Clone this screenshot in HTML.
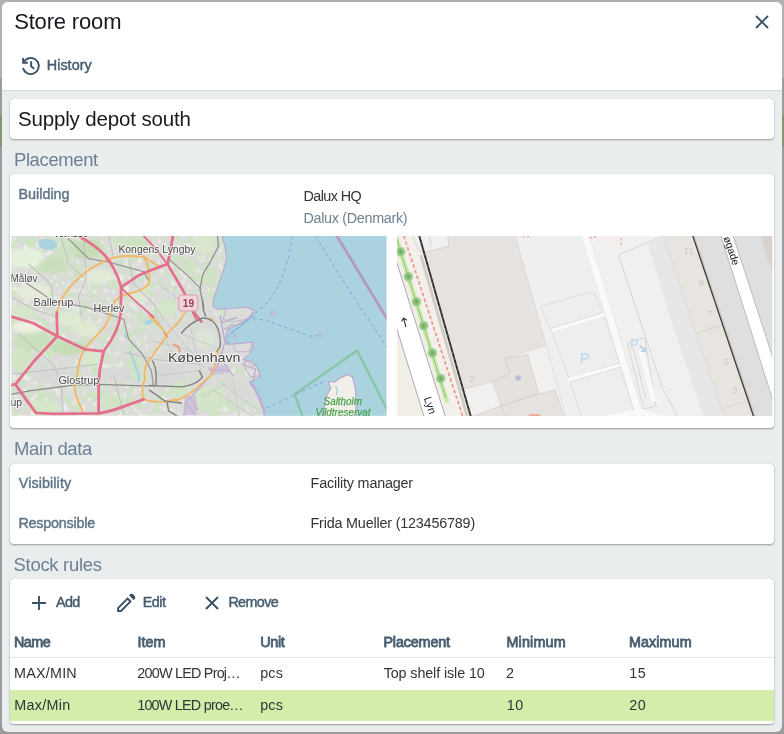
<!DOCTYPE html>
<html lang="en">
<head>
<meta charset="utf-8">
<title>Store room</title>
<style>
*{box-sizing:border-box;margin:0;padding:0}
html,body{width:784px;height:734px;overflow:hidden}
body{background:#9c9c9c;font-family:"Liberation Sans",sans-serif;font-size:14px;color:#20262b;position:relative}
.abs{position:absolute;white-space:nowrap;line-height:1}
#dialog{position:absolute;left:2px;top:2px;width:780px;height:730px;border-radius:6px;background:#e9edee;overflow:hidden}
#header{position:absolute;left:0;top:0;width:780px;height:89px;background:#fff;border-bottom:1px solid #d3d9dd}
.title{color:#161b20}
.name{color:#161b20}
.btn{color:#465c6f;-webkit-text-stroke:.45px #465c6f}
.card{position:absolute;left:10px;width:764px;background:#fff;border-radius:4px;box-shadow:0 1px 2px rgba(0,0,0,.35),0 0 1px rgba(0,0,0,.15)}
.sec{color:#6e8192}
.lbl{color:#5f7486;-webkit-text-stroke:.42px #5f7486}
.val{color:#30353a}
.sub{color:#6e8192}
.th{color:#485d70;-webkit-text-stroke:.8px #485d70}
.td{color:#30353a}
svg{position:absolute;display:block}
h1,h2{font-weight:normal}
button{all:unset}
#layer{position:absolute;left:0;top:0;width:784px;height:734px;will-change:transform}
</style>
</head>
<body>
<div style="position:absolute;left:0;top:0;width:784px;height:78px;background:#b0b0b0"></div>
<div style="position:absolute;left:0;top:115px;width:784px;height:31px;background:#84966a"></div>
<div id="dialog">
  <div id="header"></div>
</div>
<main id="layer">
  <header>
    <h1 id="title" class="abs title" style="left:14.17px;top:10.98px;font-size:22px;letter-spacing:-0.166px">Store room</h1>
    <button type="button" aria-label="Close"><svg style="left:755px;top:15px" width="14" height="14" viewBox="0 0 14 14"><path d="M1 1L13 13M13 1L1 13" stroke="#3a5166" stroke-width="1.9" fill="none"/></svg></button>
    <nav>
      <button type="button"><svg style="left:16px;top:52px" width="30" height="28" viewBox="0 0 30 28" fill="none" stroke="#3a5166" stroke-width="1.9"><path d="M9.68 7.74A8.050 8.050 0 1 1 6.970 16.080"/><path d="M7.100 6.100V10.800H11.900M7.100 10.800L9.900 7.500"/><path d="M15.130 9.200V14.200L18.200 16.900"/></svg><span id="hist" class="abs btn" style="left:46.75px;top:57.85px;font-size:14.35px;letter-spacing:0.047px">History</span></button>
    </nav>
  </header>
  <section>
    <div class="card" style="top:99px;height:40px"></div>
    <div id="supply" class="abs name" style="left:17.91px;top:109.00px;font-size:20.5px;letter-spacing:-0.146px">Supply depot south</div>
  </section>
  <section>
    <h2 id="s1" class="abs sec" style="left:13.95px;top:150.93px;font-size:18.45px;letter-spacing:-0.355px">Placement</h2>
    <div class="card" style="top:174px;height:254px"></div>
    <div id="building" class="abs lbl" style="left:18.50px;top:186.85px;font-size:14.35px;letter-spacing:0.000px">Building</div>
    <div id="hq" class="abs val" style="left:303.53px;top:189.40px;font-size:14.35px;letter-spacing:-0.573px">Dalux HQ</div>
    <div id="dk" class="abs sub" style="left:303.53px;top:210.55px;font-size:14.35px;letter-spacing:-0.309px">Dalux (Denmark)</div>
    <div id="maps" style="position:absolute;left:10px;top:175px;width:764px;height:253px">
<svg id="m1" style="left:1px;top:61px" width="377" height="180" viewBox="11.6 236 377 180" font-family="'Liberation Sans',sans-serif">
<defs>
<filter id="bl" x="-20%" y="-20%" width="140%" height="140%"><feGaussianBlur stdDeviation="6"/></filter>
<filter id="bs" x="-20%" y="-20%" width="140%" height="140%"><feGaussianBlur stdDeviation="2.5"/></filter>
<clipPath id="c1"><rect x="12.0" y="236" width="375" height="179.8"/></clipPath>
<filter id="ng" x="0" y="0" width="100%" height="100%" color-interpolation-filters="sRGB"><feTurbulence type="fractalNoise" baseFrequency="0.11" numOctaves="3" seed="7"/><feColorMatrix type="matrix" values="0 0 0 0 0.80  0 0 0 0 0.895  0 0 0 0 0.76  5 0 0 0 -2.45"/></filter>
<filter id="nl" x="0" y="0" width="100%" height="100%" color-interpolation-filters="sRGB"><feTurbulence type="fractalNoise" baseFrequency="0.16" numOctaves="2" seed="21"/><feColorMatrix type="matrix" values="0 0 0 0 0.93  0 0 0 0 0.93  0 0 0 0 0.905  0 5 0 0 -2.7"/></filter>
<radialGradient id="city"><stop offset="0" stop-color="#dadada" stop-opacity=".85"/><stop offset=".6" stop-color="#dadada" stop-opacity=".6"/><stop offset="1" stop-color="#dadada" stop-opacity="0"/></radialGradient>
</defs>
<g clip-path="url(#c1)">
<rect x="0" y="230" width="400" height="200" fill="#dbdbd9"/>
<rect x="11" y="236" width="260" height="180" filter="url(#nl)"/>
<rect x="11" y="236" width="260" height="180" filter="url(#ng)"/>
<ellipse cx="195" cy="350" rx="60" ry="55" fill="url(#city)"/>
<!-- LEFT HALF : zoom A coords -->
<g transform="translate(4,234) scale(0.2506)">
  <g filter="url(#bl)">
    <ellipse cx="90" cy="95" rx="75" ry="40" fill="#e4f1dc"/>
    <ellipse cx="200" cy="125" rx="60" ry="30" fill="#c9dfbb"/>
    <ellipse cx="330" cy="60" rx="70" ry="40" fill="#c6ddb8"/>
    <ellipse cx="250" cy="70" rx="40" ry="35" fill="#cfe3c2"/>
    <ellipse cx="520" cy="40" rx="60" ry="30" fill="#cde2c0"/>
    <ellipse cx="380" cy="170" rx="60" ry="30" fill="#e2ead8"/>
    <ellipse cx="120" cy="230" rx="70" ry="35" fill="#e6ebdc"/>
    <ellipse cx="80" cy="310" rx="50" ry="30" fill="#d6e6c8"/>
    <ellipse cx="260" cy="340" rx="50" ry="30" fill="#dcebd0"/>
    <ellipse cx="120" cy="430" rx="80" ry="40" fill="#cbe0bc"/>
    <ellipse cx="260" cy="455" rx="70" ry="30" fill="#c6ddb6"/>
    <ellipse cx="70" cy="500" rx="50" ry="40" fill="#d3e5c4"/>
    <ellipse cx="350" cy="500" rx="40" ry="30" fill="#d8e8cc"/>
    <ellipse cx="330" cy="380" rx="50" ry="30" fill="#dfe9d2"/>
    <ellipse cx="100" cy="370" rx="60" ry="25" fill="#eef0df"/>
    <ellipse cx="160" cy="690" rx="60" ry="30" fill="#d6e7c8"/>
    <ellipse cx="440" cy="670" rx="50" ry="30" fill="#d2e4c4"/>
    <ellipse cx="520" cy="530" rx="30" ry="50" fill="#cfe2c4"/>
    <ellipse cx="590" cy="350" rx="40" ry="25" fill="#cfe0d0"/>
    <ellipse cx="650" cy="300" rx="40" ry="30" fill="#d6e6ca"/>
    <ellipse cx="700" cy="620" rx="40" ry="40" fill="#d2e4c6"/>
    <ellipse cx="740" cy="130" rx="30" ry="30" fill="#cfe3c2"/>
    <ellipse cx="540" cy="250" rx="40" ry="20" fill="#dfe8d4"/>
    <ellipse cx="450" cy="560" rx="60" ry="30" fill="#d9d9d9"/>
    <ellipse cx="650" cy="560" rx="70" ry="40" fill="#d8d8d8"/>
    <ellipse cx="200" cy="560" rx="90" ry="40" fill="#d9d9d8"/>
  </g>
  <path d="M140 25 Q175 10 210 30 Q222 50 200 62 Q160 66 142 50Z" fill="#aad3df"/>
  <path d="M505 470 Q520 500 530 540 Q545 560 540 590" stroke="#aad3df" stroke-width="9" fill="none" stroke-linecap="round"/>
  <path d="M560 350 l30 -10 l10 14 l-30 10z M480 395 l12 0 l6 20 l-12 0z" fill="#aad3df"/>
  <!-- minor roads -->
  <g stroke="#c2c2c2" stroke-width="4" fill="none">
    <path d="M30 250 L120 300 L210 330 M320 10 L330 180 L300 250 L310 330 M230 10 L260 120 L330 180 M60 400 L200 520 L230 600 L240 715 M30 560 L210 540 L380 520 M420 10 L440 95 M480 470 L600 500 L782 520 M440 560 L480 720 M620 200 L700 260 M500 100 L520 200 L600 280 L640 340 M100 120 L190 200 L200 270"/>
  </g>
  <!-- rail -->
  <g stroke="#9a9a9a" stroke-width="5" fill="none" stroke-linejoin="round">
    <path d="M90 195 L200 268 L330 292 L480 340 L500 420 L555 480 L590 545 L600 612"/>
    <path d="M258 18 L340 98 L420 112 L560 150 L582 190"/>
    <path d="M660 100 L740 170 L790 220"/>
  </g>
  <path d="M30 640 L110 625 L290 602 L380 600 L560 606 L600 606" stroke="#8a8a8a" stroke-width="5" fill="none"/>
  <path d="M380 715 L470 690 L560 660" stroke="#8a8a8a" stroke-width="4" fill="none"/>
  <!-- orange -->
  <g stroke="#f3b866" stroke-width="7.5" fill="none" stroke-linejoin="round" stroke-linecap="round">
    <path d="M213 312 Q225 260 262 215 Q320 150 380 120 Q430 92 480 88 L560 90 L622 130"/>
    <path d="M560 90 Q590 140 580 200 Q560 225 500 238 Q450 250 438 280 Q435 320 400 375 Q360 420 325 455 Q300 500 295 560 Q275 610 295 660 L320 716"/>
    <path d="M585 500 Q555 530 565 580 Q545 620 560 660 Q620 680 690 660"/>
    <path d="M600 335 L635 378"/>
  </g>
  
  <!-- red -->
  <g stroke="#e4708b" stroke-width="11" fill="none" stroke-linejoin="round" stroke-linecap="round">
    <path d="M300 8 Q360 40 405 85 Q445 130 470 210 L468 320 Q460 390 400 468"/>
    <path d="M400 468 L325 460 L215 408 L120 356 L20 326"/>
    <path d="M213 314 L215 408 L120 510 L48 600 L20 604"/>
    <path d="M48 600 L90 660 L130 714 L200 718 L380 716 L430 706 L560 660"/>
    <path d="M400 468 L385 540 L380 600 L380 716"/>
    <path d="M470 212 L540 165 L600 140 L655 120 L668 60 L676 8"/>
    <path d="M655 120 L690 180 L725 240 L750 300 L790 350"/>
  </g>
  <g stroke="#e4708b" stroke-width="7.5" fill="none" stroke-linejoin="round" stroke-linecap="round">
    <path d="M470 215 L520 262 L600 332"/>
    <path d="M560 8 L600 50 L655 120"/>
  </g>
</g>
<!-- RIGHT HALF : zoom B coords -->
<g transform="translate(196,234) scale(0.2506)">
  <g filter="url(#bl)">
    <ellipse cx="40" cy="40" rx="40" ry="40" fill="#d8e6cc"/>
    <ellipse cx="60" cy="170" rx="30" ry="40" fill="#d0e2c4"/>
    <ellipse cx="40" cy="420" rx="40" ry="40" fill="#dde6d6"/>
    <ellipse cx="60" cy="660" rx="60" ry="50" fill="#d3e5c6"/>
    <ellipse cx="170" cy="620" rx="50" ry="60" fill="#dadad8"/>
  </g>
  <path d="M105 0 L118 50 L125 100 L110 150 L100 180 L82 230 L75 250 L70 290 L90 300 L125 298 L150 300 L175 295 L205 292 L235 305 L225 325 L200 345 L160 365 L130 380 L120 410 L125 440 L160 438 L230 432 L228 455 L215 480 L190 500 L225 510 L245 530 L260 565 L240 580 L215 590 L235 620 L250 650 L270 700 L278 740 L800 740 L800 0Z" fill="#aad3df" stroke="#b9a3cc" stroke-width="4" stroke-linejoin="round"/>
  <!-- harbor details -->
  <g fill="#dcdcda" stroke="#b9a3cc" stroke-width="3">
    <path d="M150 440 L228 432 L215 470 L160 470Z"/>
    <path d="M195 505 L245 530 L258 565 L220 570 L200 540Z"/>
    <path d="M125 298 L175 295 L205 292 L235 305 L205 340 L150 350 L110 340Z"/>
  </g>
  
  <circle cx="310" cy="318" r="8" fill="#d9c9d9" stroke="#b79cc4" stroke-width="3"/>
  <circle cx="497" cy="405" r="7" fill="#d9c9d9" stroke="#b79cc4" stroke-width="3"/>
  <circle cx="158" cy="407" r="5" fill="#d9c9d9" stroke="#b79cc4" stroke-width="3"/>
  <!-- rail in right half -->
  <g stroke="#8e8e8e" stroke-width="5" fill="none" stroke-linejoin="round">
    <path d="M88 8 L92 50 L60 110 L30 160 L18 220 L35 300"/>
  </g>
  <g stroke="#f3b866" stroke-width="7.5" fill="none" stroke-linejoin="round" stroke-linecap="round">

  </g>
  <!-- Saltholm -->
  
  <!-- reserve -->
  <path d="M432 740 L396 640 L645 465 L775 720" stroke="#84c4a2" stroke-width="9.500" fill="none" stroke-linejoin="miter" opacity=".9"/>
  <!-- ferry dashes -->
  <g stroke="#8aa6e4" stroke-width="4" fill="none" stroke-dasharray="14 12">
    <path d="M385 8 Q380 80 350 160 Q320 240 280 280 Q230 325 140 400"/>
    <path d="M480 8 L560 140 L650 280 L770 460"/>
    <path d="M230 335 L280 345 L380 380 L460 408 L495 405"/>
    <path d="M285 695 L400 640 L520 585"/>
    <path d="M130 440 L135 400 L230 330"/>
  </g>
  <!-- purple line -->
  <path d="M562 4 L772 350" stroke="#b7a1c3" stroke-width="12" fill="none"/>
  <path d="M562 4 L772 350" stroke="#a38ab2" stroke-width="3" fill="none" stroke-dasharray="10 4"/>
</g>
<!-- ZOOM C : central Copenhagen -->
<g transform="translate(150,300) scale(0.16085)" fill="none" stroke-linejoin="round" stroke-linecap="round">
  <g stroke="#c9c9c9" stroke-width="6">
    <path d="M30 60 L160 380 M0 250 L300 330 M90 120 L340 420 M200 210 L420 300 M250 150 L330 480 M60 470 L300 440 M450 520 L700 700 M400 560 L640 720 M520 500 L560 720 M330 600 L480 520"/>
  </g>
  <g stroke="#bfaed2" stroke-width="9">
    <path d="M440 100 L455 180 L470 260 L450 330 L420 420 L380 470 L300 560 L230 630 L215 720"/>
    <path d="M370 430 L500 440 M470 400 L520 470 M230 640 L280 715 M250 600 L300 680 M470 180 L520 150 M450 140 L540 110"/>
    <path d="M580 400 L660 430 L640 520 L690 610 L720 700"/>
  </g>
  <path d="M215 600 L290 590 L300 715 L215 715Z" fill="#c8b8d6" fill-opacity=".7" stroke="none"/>
  <path d="M370 420 L480 400 L510 450 L380 470Z" fill="#c8b8d6" fill-opacity=".6" stroke="none"/>
  <g stroke="#838383" stroke-width="9">
    <path d="M200 205 Q240 150 330 112 Q400 110 430 190 Q445 250 440 290 L420 320"/>
    <path d="M0 532 L200 540 Q300 525 330 480 L310 440"/>
    <path d="M0 560 L100 630 L200 640 M330 0 L335 60 L350 100"/>
    <path d="M20 380 Q50 430 40 530 M110 640 L120 690 L170 720"/>
  </g>
  <g stroke="#f3b866" stroke-width="11">
    <path d="M0 372 L60 290 L120 200 L180 140 L220 80"/>
    <path d="M0 100 L80 180 L110 215"/>
    <path d="M165 626 L200 612 L280 560 L380 470 L410 400 L430 312"/>
    <path d="M385 112 L400 130"/>
  </g>
  <path d="M150 275 L180 290 L190 320 M95 205 L110 230" stroke="#ef9b6c" stroke-width="11"/>
  <path d="M0 85 L20 105 M270 80 L290 120" stroke="#e4708b" stroke-width="11"/>
</g>
<path d="M328.9 381.5 L335.2 382.1 L340.3 378.3 L348.0 374.4 L353.1 377.0 L354.4 382.1 L356.3 391.0 L356.9 418.0 L324.4 418.0 L325.0 406.3 L327.6 394.8 L331.4 388.5Z" fill="#f1eee8" stroke="#b9a3cc" stroke-width="1.1" stroke-linejoin="round"/>
<path d="M336 386 l2 4 l-1 5 M342 404 l5 2" stroke="#aad3df" stroke-width="1.500" fill="none"/>
<!-- shield 19 -->
<rect x="179.500" y="295" width="19" height="16" rx="3" fill="#f1d3da" stroke="#dd9aaa" stroke-width="1"/>
<text x="189" y="307" font-size="10" font-weight="bold" fill="#9a3a52" text-anchor="middle">19</text>
<!-- labels -->
<g fill="#4a4a4a" stroke="#fff" stroke-width="2" paint-order="stroke" stroke-linejoin="round" stroke-opacity=".7">
  <text x="119" y="253" font-size="10.500" textLength="77" lengthAdjust="spacingAndGlyphs">Kongens Lyngby</text>
  <text x="11" y="282" font-size="10.500" textLength="27" lengthAdjust="spacingAndGlyphs">Måløv</text>
  <text x="34" y="306" font-size="10.500" textLength="40" lengthAdjust="spacingAndGlyphs">Ballerup</text>
  <text x="94" y="312" font-size="10.500" textLength="31" lengthAdjust="spacingAndGlyphs">Herlev</text>
  <text x="59" y="384" font-size="10.500" textLength="41" lengthAdjust="spacingAndGlyphs">Glostrup</text>
  <text x="11" y="406" font-size="10.500">up</text>
  <text x="168.5" y="362.3" font-size="13" fill="#444" textLength="72.5" lengthAdjust="spacingAndGlyphs">København</text>
  <text x="54" y="237.200" font-size="10.500" fill="#222" textLength="35" lengthAdjust="spacingAndGlyphs">Værløse</text>
</g>
<g fill="#3f9e3f" stroke="#3f9e3f" stroke-width=".15" font-style="italic" font-size="10" text-anchor="middle">
  <text x="343.400" y="404.600" textLength="38.500" lengthAdjust="spacingAndGlyphs">Saltholm</text>
  <text x="343.600" y="415.600" textLength="55" lengthAdjust="spacingAndGlyphs">Vildtreservat</text>
</g>
</g>
</svg>

<svg id="m2" style="left:387px;top:61px" width="377" height="180" viewBox="397.7 236 377 180" font-family="'Liberation Sans',sans-serif">
<defs><radialGradient id="tg"><stop offset="0" stop-color="#6fb562"/><stop offset=".6" stop-color="#86c27a" stop-opacity=".95"/><stop offset="1" stop-color="#9fd090" stop-opacity=".55"/></radialGradient><clipPath id="c2"><rect x="397.9" y="236" width="375.1" height="179.8"/></clipPath></defs>
<g clip-path="url(#c2)">
<rect x="390" y="230" width="390" height="190" fill="#f1f0ee"/>
<!-- far left beige + road -->
<path d="M390 230 L403 230 L455 420 L390 420Z" fill="#f2efe9"/>
<path d="M390 239 L397.500 262.500 L445.750 415.750 L447 420 L426 420 L424.500 415.750 L397.500 328.750 L390 305Z" fill="#ffffff" stroke="#ababab" stroke-width="1"/>
<!-- beige strip between road and black line -->
<path d="M396 230 L418 230 L472 420 L448 420Z" fill="#f3f0eb"/>
<!-- green strip -->
<path d="M395.500 233 L447.500 401" stroke="#cdeaae" stroke-width="4.600" stroke-linecap="round" fill="none"/>
<path d="M395.500 233 L446.500 398" stroke="#8fbf78" stroke-width="1" fill="none"/>
<g fill="url(#tg)">
  <circle cx="401.4" cy="251.7" r="5"/><circle cx="409.1" cy="276.7" r="5"/><circle cx="417.1" cy="301.7" r="5"/>
  <circle cx="424.4" cy="325.8" r="5"/><circle cx="433.1" cy="353.0" r="5"/><circle cx="441.4" cy="378.5" r="5"/>
  <circle cx="394.1" cy="226.5" r="5"/>
</g>
<g fill="#a8743a"><circle cx="401.4" cy="251.7" r=".8"/><circle cx="409.1" cy="276.7" r=".8"/><circle cx="417.1" cy="301.7" r=".8"/><circle cx="424.4" cy="325.8" r=".8"/><circle cx="433.1" cy="353.0" r=".8"/><circle cx="441.4" cy="378.5" r=".8"/></g>
<!-- red dashes -->
<path d="M402.600 230 L464.600 420" stroke="#f3938a" stroke-width="1.700" stroke-dasharray="3.600 2.400" fill="none"/>
<!-- big building -->
<path d="M417.800 230 L514 230 L547 345 L505.750 358.750 L510.750 373.750 L493.250 381.750 L464.500 389Z" fill="#e6e2df" stroke="#d6d0ca" stroke-width=".6"/>
<!-- small top-left building -->
<path d="M411 230 L448 230 L449.500 246.200 L424.500 252.500 L419.500 251Z" fill="#f1f0ef" stroke="#cfcac5" stroke-width=".7"/>
<path d="M429.500 230 L432 247" stroke="#cfcac5" stroke-width=".7"/>
<!-- building 2 -->
<path d="M505.750 358.750 L528.250 354.500 L539.500 393.250 L502 405.750 L493.250 381.750 L510.750 373.750Z" fill="#e5e1de" stroke="#d3cdc7" stroke-width=".7"/>
<!-- building 3 -->
<path d="M472 417 L502 405.750 L555.750 389.500 L565 417Z" fill="#e6e2df" stroke="#d3cdc7" stroke-width=".7"/>
<path d="M502 405.750 L506 417" stroke="#d3cdc7" stroke-width=".7"/>
<rect x="529.500" y="414.300" width="11.500" height="3" fill="#e9a88f"/>
<!-- black line left -->
<path d="M421.500 255 L469 420" stroke="#d3ccc5" stroke-width="3" fill="none"/>
<path d="M418.300 230 L472.500 420" stroke="#2a2a2a" stroke-width="1.900" fill="none"/><path d="M418.300 230 L472.500 420" stroke="#8a8a8a" stroke-width=".5" stroke-dasharray="3 3" fill="none"/>
<!-- parking area -->
<path d="M514 230 L583 230 L639 420 L568 420 L547 345Z" fill="#efefef"/>
<g fill="#eeeeee" stroke="#d9d5d0" stroke-width=".7">
  <path d="M541.200 306.200 L593.700 291.200 L603.700 312.500 L551.200 328.700Z"/>
  <path d="M552 331 L605 316 L620 363 L570 379Z"/>
  <path d="M571 382 L621 367 L634 410 L612 417 L582 417Z"/>
</g>
<path d="M516 236 L568 420" stroke="#dcd8d4" stroke-width=".7" fill="none"/>
<path d="M553.500 330 L605.500 314.500 M570.500 379.500 L621 365" stroke="#fafafa" stroke-width="3" stroke-linecap="round" fill="none"/>
<!-- white path -->
<path d="M582.700 226 L611.500 320 L633.200 392.500 L641.500 420" stroke="#e6e4e1" stroke-width="8" fill="none"/>
<path d="M582.700 226 L611.500 320 L633.200 392.500 L641.500 420" stroke="#f9f9f9" stroke-width="6.800" fill="none"/>
<path d="M600 420 L640 411 L668 420" stroke="#f9f9f9" stroke-width="5" fill="none"/>
<!-- outlined polygon right of path -->
<path d="M619.250 255 L648 242.500 L664 236 L700 340 L728 420 L680 420 L663 387.500 L640.500 320Z" fill="#f1f0ee" stroke="#cfcbc6" stroke-width=".7"/>
<!-- small parking -->
<path d="M628 342.500 L645.500 337.500 L656.750 406.250 L644.250 408.750Z" fill="#efefef" stroke="#cfcbc6" stroke-width=".7"/>
<path d="M641.500 350 L655 402" stroke="#f9f9f9" stroke-width="5" fill="none"/>
<path d="M634 348 L646 397" stroke="#cfcbc6" stroke-width=".7" fill="none"/>
<!-- grey strip -->
<path d="M648 242.500 L664.250 236 L666 230 L690 230 L726 420 L705.500 420 L671.750 320Z" fill="#e7e7e7"/>
<!-- beige buildings -->
<path d="M662.300 230 L691 230 L755 420 L726 420Z" fill="#e8e4e0" stroke="#d8d2cc" stroke-width=".6"/>
<g stroke="#d3cdc7" stroke-width=".7" fill="none"><path d="M708 328.800 L723 325 M695.500 333.700 L721.750 326.200 M724.200 408.700 L746.700 401.200"/></g>
<!-- grey band + road right -->
<path d="M691 230 L780 230 L780 420 L755 420Z" fill="#dfdfdf"/>
<path d="M759.500 230 L780 230 L780 294Z" fill="#d9d1cb"/>
<path d="M719.800 230 L731.900 230 L793.900 420 L779.700 420Z" fill="#ffffff" stroke="#b4b4b4" stroke-width=".9"/>
<path d="M692.500 230 L756.500 420" stroke="#d3ccc5" stroke-width="2.400" fill="none"/>
<path d="M691.500 230 L755.500 420" stroke="#3a3a3a" stroke-width="1.250" fill="none"/>
<!-- red marks top -->
<g stroke="#f2a59a" stroke-width="1.200" fill="none" stroke-dasharray="2.500 2"><path d="M523 237 L531 237 M590 238 L597 237 M621.800 238 L621.800 246"/></g>
<!-- labels -->
<g fill="#cbcbcb" font-size="9.500" text-anchor="middle">
  <text x="689.500" y="254">11</text><text x="702" y="286">9</text><text x="710.500" y="316.500">7</text>
  <text x="727" y="364.500">5</text><text x="735.500" y="393">3</text><text x="472.500" y="381.500">2</text>
</g>
<text x="585.500" y="363" font-size="15" font-weight="bold" fill="#c6dcee" text-anchor="middle">P</text>
<text x="635" y="347.500" font-size="13" font-weight="bold" fill="#c6dcee" text-anchor="middle">P</text>
<path d="M640.500 345.500 L645.500 351 M645.800 347.300 L645.800 351.300 L641.800 351.300" stroke="#a9cbe6" stroke-width="1.300" fill="none"/>
<circle cx="518.800" cy="378" r="2.800" fill="#b7bcd9"/>
<text transform="translate(724 237.800) rotate(71)" font-size="10.500" fill="#1a1a1a">øgade</text>
<text transform="translate(424.500 398.300) rotate(71)" font-size="11" fill="#1a1a1a">Lyn</text>
<path d="M404.200 318 L406.600 327 M402.300 321.600 L404.200 318 L407.600 320.300" stroke="#3a3a3a" stroke-width="1.100" fill="none" stroke-linejoin="round"/>
</g>
</svg>

    </div>
  </section>
  <section>
    <h2 id="s2" class="abs sec" style="left:14.09px;top:439.98px;font-size:18.45px;letter-spacing:-0.346px">Main data</h2>
    <div class="card" style="top:464px;height:80px"></div>
    <div id="vis" class="abs lbl" style="left:18.87px;top:475.85px;font-size:14.35px;letter-spacing:0.080px">Visibility</div>
    <div id="fac" class="abs val" style="left:310.61px;top:475.85px;font-size:14.35px;letter-spacing:-0.179px">Facility manager</div>
    <div id="resp" class="abs lbl" style="left:18.39px;top:515.85px;font-size:14.35px;letter-spacing:-0.206px">Responsible</div>
    <div id="frida" class="abs val" style="left:310.55px;top:515.85px;font-size:14.35px;letter-spacing:-0.184px">Frida Mueller (123456789)</div>
  </section>
  <section>
    <h2 id="s3" class="abs sec" style="left:13.61px;top:555.98px;font-size:18.45px;letter-spacing:-0.288px">Stock rules</h2>
    <div class="card" style="top:579px;height:145px;overflow:hidden">
      <div style="position:absolute;left:0;top:78px;width:764px;height:1px;background:#e3e7ea"></div>
      <div style="position:absolute;left:0;top:111px;width:764px;height:31px;background:#d5edab"></div>
    </div>
    <div role="toolbar">
      <button type="button"><svg style="left:32px;top:596px" width="14" height="14" viewBox="0 0 14 14"><path d="M7 0v14M0 7h14" stroke="#3a5166" stroke-width="1.900" fill="none"/></svg><span id="add" class="abs btn" style="left:56.10px;top:594.85px;font-size:14.35px;letter-spacing:-0.656px">Add</span></button>
      <button type="button"><svg style="left:111px;top:589px" width="30" height="28" viewBox="0 0 30 28"><path d="M16.500 9.500L19.500 12.500L10 22H7.100V19.100Z" fill="none" stroke="#3a5166" stroke-width="1.9"/><path d="M18 6.300L19.600 4.900Q21.300 4.200 23 5.900Q24.800 7.700 24.100 9.400L22.600 10.900Z" fill="#3a5166"/></svg><span id="edit" class="abs btn" style="left:142.84px;top:594.85px;font-size:14.35px;letter-spacing:-0.534px">Edit</span></button>
      <button type="button"><svg style="left:205px;top:596px" width="14" height="14" viewBox="0 0 14 14"><path d="M1 1L13 13M13 1L1 13" stroke="#3a5166" stroke-width="1.900" fill="none"/></svg><span id="rem" class="abs btn" style="left:228.39px;top:594.85px;font-size:14.35px;letter-spacing:-0.612px">Remove</span></button>
    </div>
    <div role="table">
      <div role="row">
        <div id="hn" role="columnheader" class="abs th" style="left:13.95px;top:634.85px;font-size:14.35px;letter-spacing:-0.530px">Name</div>
        <div id="hi" role="columnheader" class="abs th" style="left:137.50px;top:634.85px;font-size:14.35px;letter-spacing:0.000px">Item</div>
        <div id="hu" role="columnheader" class="abs th" style="left:260.36px;top:634.85px;font-size:14.35px;letter-spacing:-0.385px">Unit</div>
        <div id="hp" role="columnheader" class="abs th" style="left:383.46px;top:634.85px;font-size:14.35px;letter-spacing:-0.149px">Placement</div>
        <div id="hmi" role="columnheader" class="abs th" style="left:506.43px;top:634.85px;font-size:14.35px;letter-spacing:0.168px">Minimum</div>
        <div id="hma" role="columnheader" class="abs th" style="left:629.04px;top:634.85px;font-size:14.35px;letter-spacing:0.064px">Maximum</div>
      </div>
      <div role="row">
        <div id="r1n" role="cell" class="abs td" style="left:14.07px;top:665.85px;font-size:14.35px;letter-spacing:0.215px">MAX/MIN</div>
        <div id="r1i" role="cell" class="abs td" style="left:137.36px;top:665.85px;font-size:14.35px;letter-spacing:-0.764px">200W LED Proj…</div>
        <div id="r1u" role="cell" class="abs td" style="left:260.20px;top:665.85px;font-size:14.35px;letter-spacing:0.200px">pcs</div>
        <div id="r1p" role="cell" class="abs td" style="left:383.65px;top:665.85px;font-size:14.35px;letter-spacing:-0.108px">Top shelf isle 10</div>
        <div id="r1mi" role="cell" class="abs td" style="left:506.00px;top:665.85px;font-size:14.35px;letter-spacing:0.000px">2</div>
        <div id="r1ma" role="cell" class="abs td" style="left:629.20px;top:665.85px;font-size:14.35px;letter-spacing:0.500px">15</div>
      </div>
      <div role="row" aria-selected="true">
        <div id="r2n" role="cell" class="abs td" style="left:14.21px;top:697.85px;font-size:14.35px;letter-spacing:0.305px">Max/Min</div>
        <div id="r2i" role="cell" class="abs td" style="left:137.18px;top:697.85px;font-size:14.35px;letter-spacing:-0.758px">100W LED proe…</div>
        <div id="r2u" role="cell" class="abs td" style="left:260.20px;top:697.85px;font-size:14.35px;letter-spacing:0.200px">pcs</div>
        <div id="r2mi" role="cell" class="abs td" style="left:506.70px;top:697.85px;font-size:14.35px;letter-spacing:0.500px">10</div>
        <div id="r2ma" role="cell" class="abs td" style="left:629.20px;top:697.85px;font-size:14.35px;letter-spacing:0.500px">20</div>
      </div>
    </div>
  </section>
</main>
</body>
</html>
